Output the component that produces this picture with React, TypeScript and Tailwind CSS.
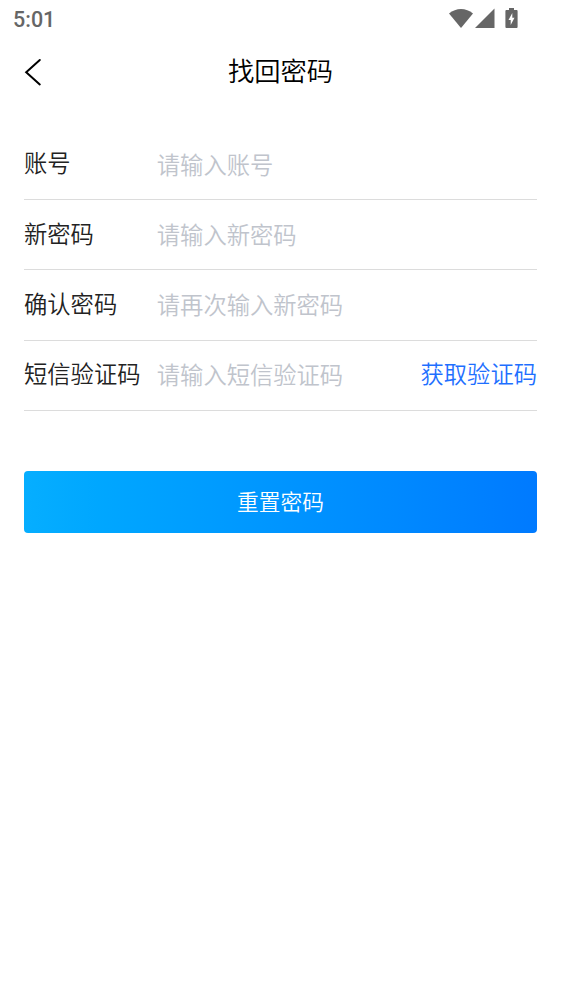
import React from 'react';

const FIELDS = [
  { id: 'account', label: '账号', placeholder: '请输入账号', type: 'text' },
  { id: 'password', label: '新密码', placeholder: '请输入新密码', type: 'password' },
  { id: 'confirm', label: '确认密码', placeholder: '请再次输入新密码', type: 'password' },
  { id: 'code', label: '短信验证码', placeholder: '请输入短信验证码', type: 'text', action: '获取验证码' },
];

const StatusBar: React.FC = () => (
  <div className="flex h-9 items-center justify-between pl-[13px] pr-[43px] text-[#666]">
    <span className="pt-[4px] font-['Roboto',sans-serif] text-[21.5px] font-medium leading-none">5:01</span>
    <div className="flex items-center">
      <svg className="h-[20px] w-[24px]" viewBox="0 0 24 20" fill="currentColor">
        <path d="M0 5.5C7 -0.6 17 -0.6 24 5.5L12 20Z" />
      </svg>
      <svg className="ml-[2px] h-[20px] w-[20px]" viewBox="0 0 20 20" fill="currentColor">
        <path d="M19.5 0.5V20H0Z" />
      </svg>
      <svg className="ml-[10px] h-[20px] w-[13px]" viewBox="0 0 13 20" fill="currentColor">
        <path fillRule="evenodd" d="M4 0H9V2H11.7Q12.6 2 12.6 3.3V18.7Q12.6 20 11.7 20H1.3Q0.4 20 0.4 18.7V3.3Q0.4 2 1.3 2H4ZM7.3 5L3.5 12H5.7V17L9.5 9.8H7.3Z" />
      </svg>
    </div>
  </div>
);

const App: React.FC = () => {
  return (
    <div className="min-h-[999px] bg-white font-['Noto_Sans_CJK_SC',sans-serif] font-[350]">
      <StatusBar />

      <header className="grid h-[70px] grid-cols-[80px_1fr_80px] items-center">
        <button type="button" aria-label="返回" className="pl-6 pt-[2px]">
          <svg className="h-7 w-[18px]" viewBox="0 0 18 28" fill="none" stroke="#000" strokeWidth="2" strokeLinecap="round">
            <path d="M15.8 2L2.2 14.2L15.8 26.4" />
          </svg>
        </button>
        <h1 className="pb-[2px] text-center text-[26.3px] font-[350] leading-none text-black">找回密码</h1>
      </header>

      <form className="px-6 pt-6" onSubmit={(e) => e.preventDefault()}>
        {FIELDS.map((field) => (
          <div key={field.id} className="flex h-[70.2px] items-center border-b border-[#dcdcdc]">
            <label htmlFor={field.id} className="w-[132.8px] shrink-0 pb-[3.5px] text-[23.3px] text-[#222]">
              {field.label}
            </label>
            <input
              id={field.id}
              type={field.type}
              placeholder={field.placeholder}
              className="min-w-0 flex-1 pb-[1px] text-[23.3px] outline-none placeholder:text-[#c0c4cc]"
            />
            {field.action && (
              <button type="button" className="shrink-0 pb-[4px] text-[23.3px] text-[#1e6fff]">
                {field.action}
              </button>
            )}
          </div>
        ))}

        <button
          type="submit"
          className="mt-[60px] h-[62px] w-full rounded bg-linear-to-r from-[#06aeff] to-[#007aff] pb-[1px] text-[21.7px] text-white"
        >
          重置密码
        </button>
      </form>
    </div>
  );
};

export default App;
